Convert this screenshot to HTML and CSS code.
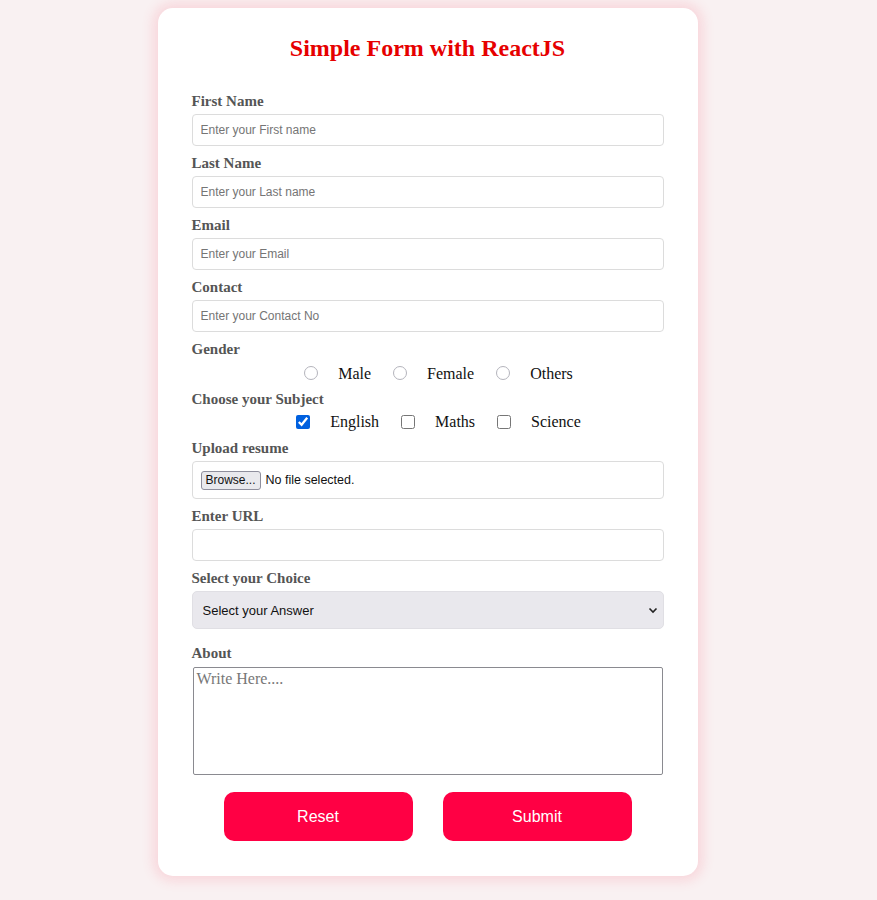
FILE: index.html
```html
<!DOCTYPE html>
<html lang="en">
<head>
<meta charset="utf-8">
<title>Simple Form with ReactJS</title>
<link rel="stylesheet" href="styles.css">
</head>
<body>
<div class="card">
  <h2 class="title">Simple Form with ReactJS</h2>
  <form class="form">
    <label class="lbl" for="fn">First Name</label>
    <input class="txt" id="fn" type="text" placeholder="Enter your First name">

    <label class="lbl" for="ln">Last Name</label>
    <input class="txt" id="ln" type="text" placeholder="Enter your Last name">

    <label class="lbl" for="em">Email</label>
    <input class="txt" id="em" type="email" placeholder="Enter your Email">

    <label class="lbl" for="ct">Contact</label>
    <input class="txt" id="ct" type="tel" placeholder="Enter your Contact No">

    <label class="lbl">Gender</label>
    <div class="choices radios">
      <input class="radio" type="radio" name="g" id="m"><label class="opt" for="m">Male</label>
      <input class="radio" type="radio" name="g" id="f"><label class="opt" for="f">Female</label>
      <input class="radio" type="radio" name="g" id="o"><label class="opt" for="o">Others</label>
    </div>

    <label class="lbl">Choose your Subject</label>
    <div class="choices checks">
      <input class="check" type="checkbox" id="en" checked><label class="opt" for="en">English</label>
      <input class="check" type="checkbox" id="ma"><label class="opt" for="ma">Maths</label>
      <input class="check" type="checkbox" id="sc"><label class="opt" for="sc">Science</label>
    </div>

    <label class="lbl">Upload resume</label>
    <div class="file">
      <span class="browse">Browse...</span>
      <span class="nofile">No file selected.</span>
    </div>

    <label class="lbl" for="url">Enter URL</label>
    <input class="txt url" id="url" type="url">

    <label class="lbl" for="sel">Select your Choice</label>
    <div class="selwrap">
      <select class="sel" id="sel">
        <option>Select your Answer</option>
      </select>
      <svg class="chev" width="10" height="7" viewBox="0 0 10 7"><path d="M1.5 1.5 L5 5 L8.5 1.5" fill="none" stroke="#222" stroke-width="1.6"/></svg>
    </div>

    <label class="lbl about" for="ab">About</label>
    <textarea class="area" id="ab" placeholder="Write Here...."></textarea>

    <div class="btns">
      <button class="btn" type="button">Reset</button>
      <button class="btn" type="button">Submit</button>
    </div>
  </form>
</div>
</body>
</html>
```

FILE: styles.css
```css
* { box-sizing: border-box; }
html, body { margin: 0; padding: 0; }
html { background: #f9f1f2; }
body {
  background: #f9f1f2;
  padding: 8px 22px 20px 0;
  font-family: "Liberation Serif", "Times New Roman", serif;
}
.card {
  width: 540px;
  height: 868px;
  margin: 0 auto;
  background: #fff;
  border-radius: 15px;
  box-shadow: 0 0 12px 5px rgba(250, 70, 95, 0.15);
  padding: 26px 34px 0;
}
.title {
  margin: 0 0 30px;
  text-align: center;
  font-size: 24px;
  line-height: 28px;
  font-weight: bold;
  color: #e60000;
}
.form {
  display: flex;
  flex-direction: column;
}
.lbl {
  display: block;
  margin: 8px 0 4px;
  font-size: 15px;
  line-height: 18px;
  font-weight: bold;
  color: #555;
}
.form > .lbl:first-child { margin-top: 0; }
.txt {
  display: block;
  width: 472px;
  height: 32px;
  margin: 0;
  padding: 0 8px;
  border: 1px solid #dcdcdc;
  border-radius: 4px;
  font-family: "Liberation Sans", Arial, sans-serif;
  font-size: 12px;
  color: #222;
  outline: none;
}
.txt::placeholder { color: #757575; }
.choices {
  display: flex;
  justify-content: center;
  align-items: center;
}
.radios { height: 18px; margin-top: 2px; }
.checks { height: 19px; margin-top: 0; }
.radio, .check {
  margin: 0 20px 0 22px;
  width: 14px;
  height: 14px;
  flex: none;
}
.radio {
  appearance: none;
  -webkit-appearance: none;
  border: 1px solid #b4b4bc;
  border-radius: 50%;
  background: #fff;
}
.check {
  accent-color: #0060df;
}
.opt {
  font-size: 16px;
  line-height: 19px;
  color: #111;
}
.file {
  display: flex;
  align-items: center;
  height: 38px;
  padding: 0 8px;
  border: 1px solid #dcdcdc;
  border-radius: 4px;
  font-family: "Liberation Sans", Arial, sans-serif;
}
.browse {
  display: inline-block;
  height: 19px;
  line-height: 17px;
  padding: 0 4px;
  background: #e9e9ed;
  border: 1px solid #8f8f9d;
  border-radius: 3px;
  font-size: 12px;
  color: #111;
  margin-right: 5px;
}
.nofile { font-size: 12.5px; color: #111; }
.url { height: 32px; }
.selwrap {
  position: relative;
  width: 472px;
  height: 38px;
}
.sel {
  appearance: none;
  -webkit-appearance: none;
  display: block;
  width: 100%;
  height: 38px;
  margin: 0;
  padding: 0 10px;
  background: #e9e8ed;
  border: 1px solid #e0dfe4;
  border-radius: 5px;
  font-family: "Liberation Sans", Arial, sans-serif;
  font-size: 13px;
  color: #111;
}
.chev {
  position: absolute;
  right: 6px;
  top: 16px;
  pointer-events: none;
}
.about { margin-top: 15px; }
.area {
  display: block;
  width: 470px;
  height: 108px;
  margin: 1px 1px 0;
  padding: 1px 3px;
  border: 1px solid #8a8a90;
  border-radius: 2px;
  resize: none;
  font-family: "Liberation Serif", "Times New Roman", serif;
  font-size: 16px;
  line-height: 20px;
  outline: none;
}
.area::placeholder { color: #777; }
.btns {
  display: flex;
  justify-content: center;
  gap: 30px;
  margin-top: 17px;
}
.btn {
  width: 189px;
  height: 49px;
  border: none;
  border-radius: 10px;
  background: #ff0044;
  color: #fff;
  font-family: "Liberation Sans", Arial, sans-serif;
  font-size: 16px;
  cursor: pointer;
}
```
